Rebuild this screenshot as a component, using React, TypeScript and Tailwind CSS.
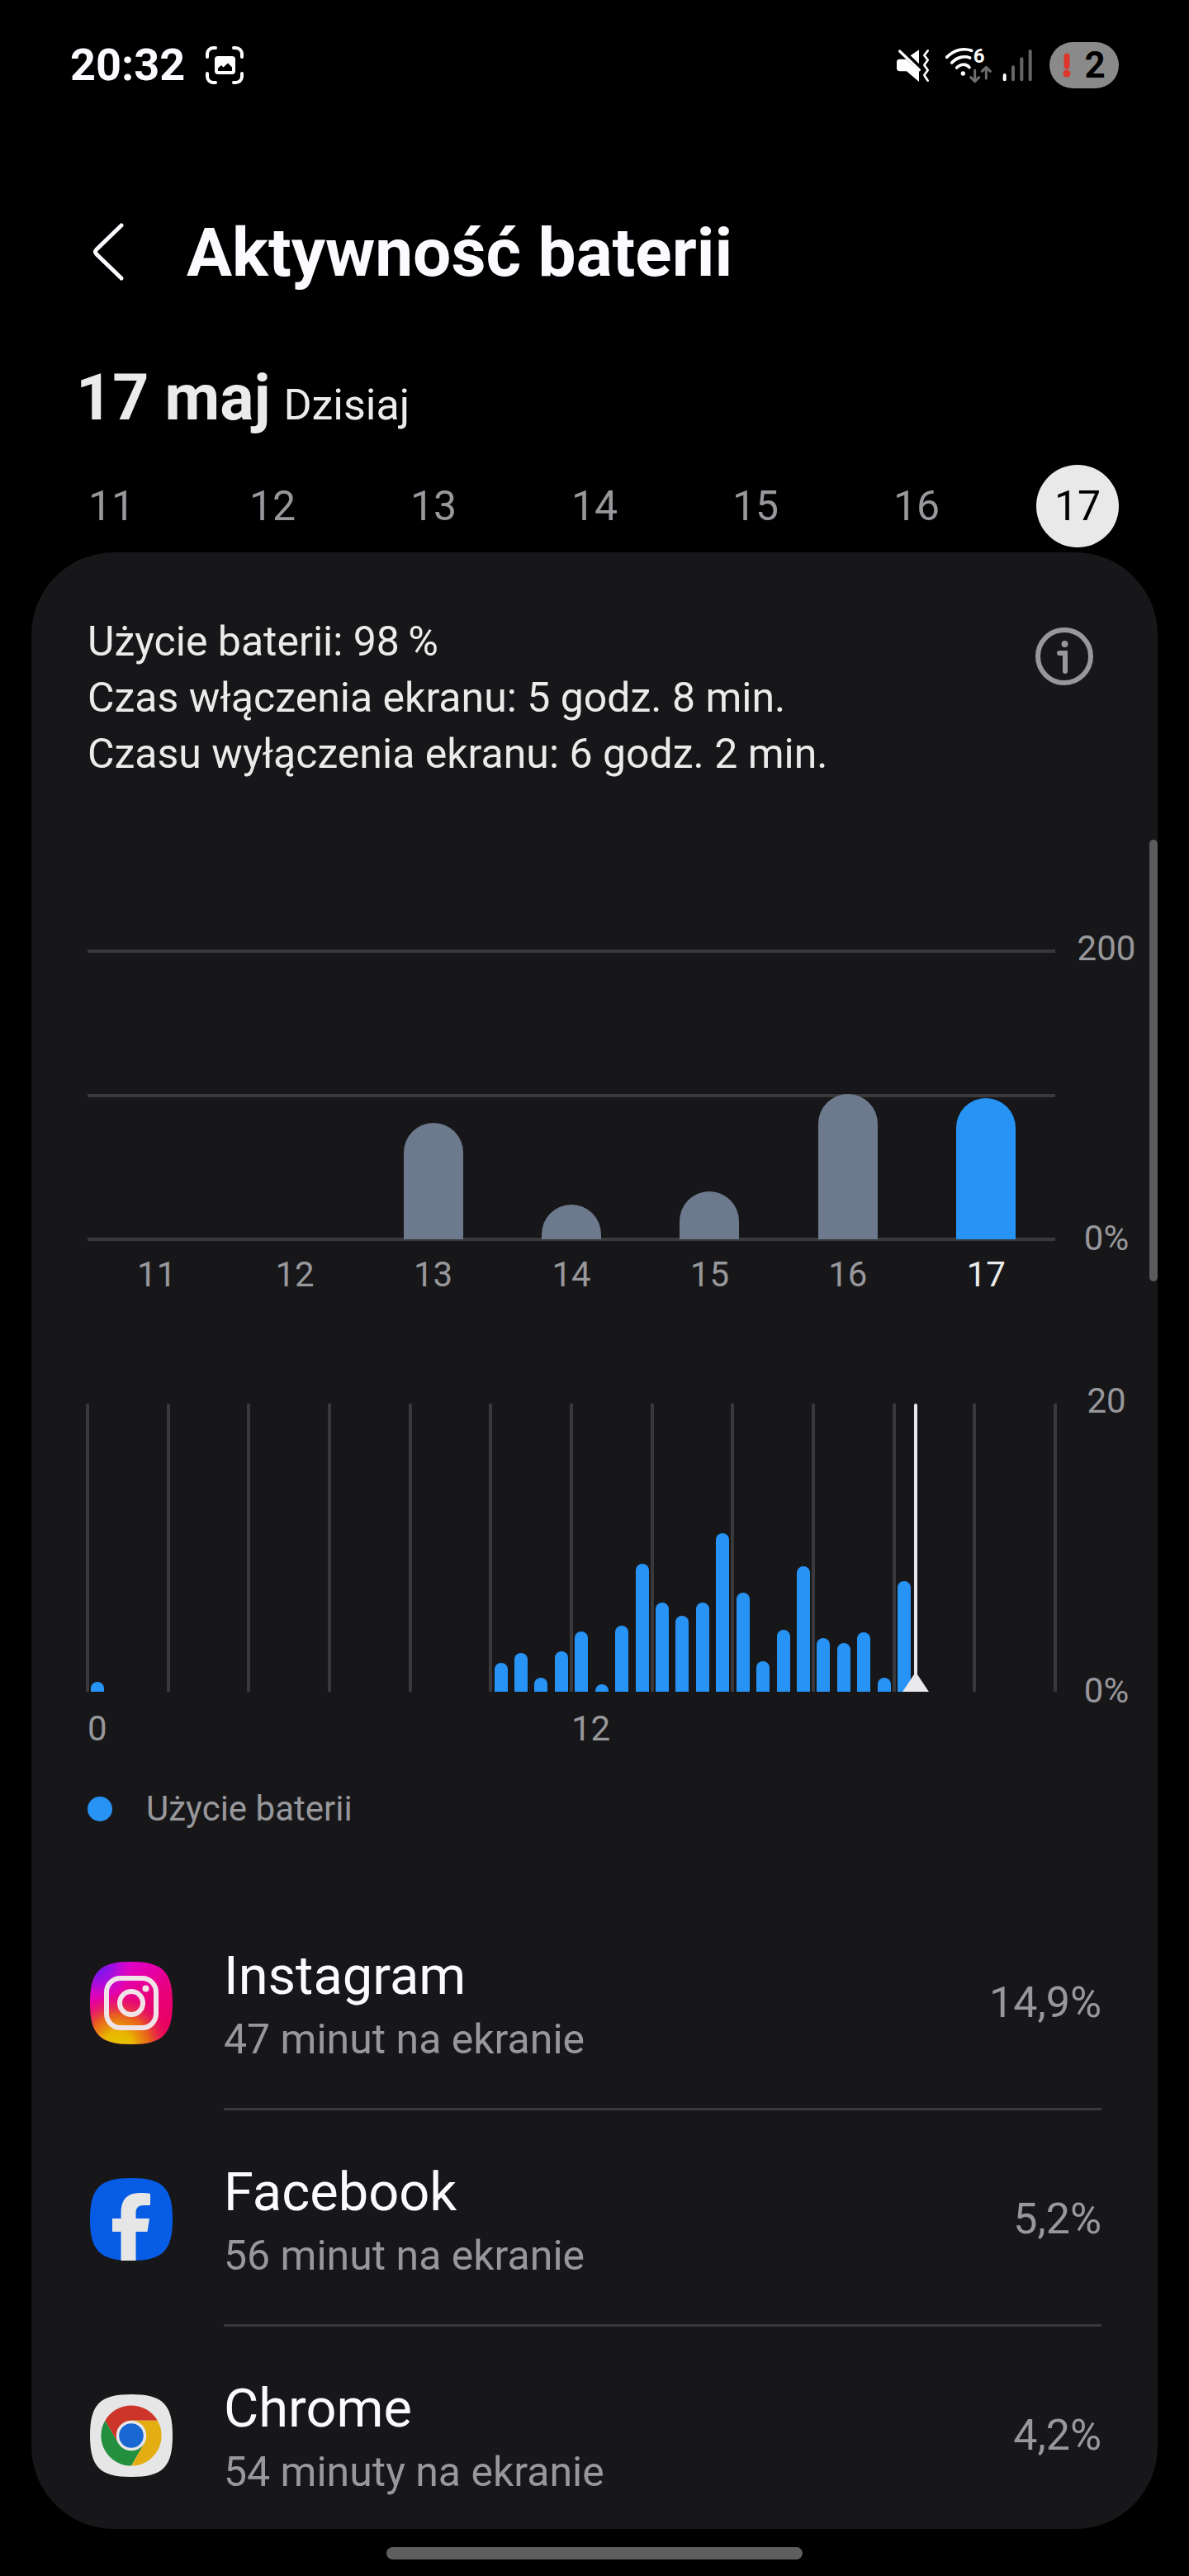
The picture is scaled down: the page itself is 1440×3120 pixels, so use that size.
import { useState, type ReactNode } from 'react';

interface AppUsage {
  name: string;
  screenTime: string;
  percent: string;
  icon: ReactNode;
}

const days = [11, 12, 13, 14, 15, 16, 17];

// zużycie dzienne w procentach, oś do 200%
const dailyUsage = [0, 0, 81, 24, 33, 101, 98];

// zużycie co pół godziny, oś do 20%
const halfHourUsage = [
  0.7, 0, 0, 0, 0, 0, 0, 0, 0, 0, 0, 0, 0, 0, 0, 0, 0, 0, 0, 0, 2, 2.7, 1, 2.8,
  4.2, 0.5, 4.6, 8.9, 6.2, 5.3, 6.2, 11, 6.9, 2.1, 4.3, 8.7, 3.7, 3.4, 4.1, 1, 7.7,
  0, 0, 0, 0, 0, 0, 0,
];

const currentHour = 20.53;

const SQUIRCLE = 'M50 0C88 0 100 12 100 50S88 100 50 100 0 88 0 50 12 0 50 0Z';

function InstagramIcon() {
  return (
    <svg viewBox="0 0 100 100" className="size-[100px]" aria-hidden="true">
      <defs>
        <linearGradient id="ig-base" x1="0.3" y1="0" x2="0.8" y2="1">
          <stop offset="0" stopColor="#e000d8" />
          <stop offset="0.5" stopColor="#e8007c" />
          <stop offset="1" stopColor="#e80058" />
        </linearGradient>
        <radialGradient id="ig-purple" gradientUnits="userSpaceOnUse" cx="8" cy="4" r="46">
          <stop offset="0" stopColor="#5a1cf0" />
          <stop offset="0.5" stopColor="#9a10e4" stopOpacity="0.8" />
          <stop offset="1" stopColor="#e010d0" stopOpacity="0" />
        </radialGradient>
        <radialGradient id="ig-yellow" gradientUnits="userSpaceOnUse" cx="34" cy="104" r="66">
          <stop offset="0" stopColor="#e6cc00" />
          <stop offset="0.3" stopColor="#e8b400" />
          <stop offset="0.6" stopColor="#e87010" stopOpacity="0.85" />
          <stop offset="1" stopColor="#e81060" stopOpacity="0" />
        </radialGradient>
      </defs>
      <path d={SQUIRCLE} fill="url(#ig-base)" />
      <path d={SQUIRCLE} fill="url(#ig-purple)" />
      <path d={SQUIRCLE} fill="url(#ig-yellow)" />
      <rect x="20" y="20" width="60" height="60" rx="17" fill="none" stroke="#f0e4e8" strokeWidth="6" />
      <circle cx="50" cy="50" r="14" fill="none" stroke="#f0e4e8" strokeWidth="6" />
      <circle cx="67.5" cy="32.5" r="4" fill="#f0e4e8" />
    </svg>
  );
}

function FacebookIcon() {
  return (
    <svg viewBox="0 0 100 100" className="size-[100px]" aria-hidden="true">
      <path d={SQUIRCLE} fill="#075ce5" />
      <path
        d="M37.500 100V65H27V49H37.500V42C37.500 26 45 18 60 18C66 18 70 18 73 19V33H66C58 33 55.500 36 55.500 43V49H72L69.500 65H55.500V100Z"
        fill="#e6e6e6"
      />
    </svg>
  );
}

function ChromeIcon() {
  return (
    <svg viewBox="0 0 100 100" className="size-[100px]" aria-hidden="true">
      <path d={SQUIRCLE} fill="#e6e6e6" />
      <path d="M50 50V31.700H81.700A36.600 36.600 0 0 0 18.300 31.700L34.150 59.150Z" fill="#cd3529" />
      <path d="M50 50L34.150 59.150L18.300 31.700A36.600 36.600 0 0 0 50 86.600L65.850 59.150Z" fill="#22903f" />
      <path d="M50 50L65.850 59.150L50 86.600A36.600 36.600 0 0 0 81.700 31.700H50Z" fill="#e4ae12" />
      <circle cx="50" cy="50" r="18.300" fill="#e6e6e6" />
      <circle cx="50" cy="50" r="14.800" fill="#1967d2" />
    </svg>
  );
}

const apps: AppUsage[] = [
  { name: 'Instagram', screenTime: '47 minut na ekranie', percent: '14,9%', icon: <InstagramIcon /> },
  { name: 'Facebook', screenTime: '56 minut na ekranie', percent: '5,2%', icon: <FacebookIcon /> },
  { name: 'Chrome', screenTime: '54 minuty na ekranie', percent: '4,2%', icon: <ChromeIcon /> },
];

function StatusBar() {
  return (
    <div className="flex h-[158px] items-center justify-between px-[85px]">
      <div className="flex items-center gap-6">
        <span className="text-[54px] font-bold leading-[60px]">20:32</span>
        <svg viewBox="0 0 48 48" className="size-12" fill="none" aria-hidden="true">
          <path
            d="M3 14V10.500A7.500 7.500 0 0 1 10.500 3H13M35 3H37.500A7.500 7.500 0 0 1 45 10.500V14M45 34V37.500A7.500 7.500 0 0 1 37.500 45H35M13 45H10.500A7.500 7.500 0 0 1 3 37.500V34"
            stroke="#fff"
            strokeWidth="4"
            strokeLinecap="round"
          />
          <rect x="12" y="13" width="25" height="22" rx="4" fill="#fff" />
          <path d="M16 31V27.500L20 24L22.500 26.500L28 21.500L33 26.500V31Z" fill="#000" />
        </svg>
      </div>

      <div className="flex items-center gap-3">
        {/* wyciszenie z wibracją */}
        <svg viewBox="0 0 138 126" className="h-[42px] w-[46px]" fill="none" aria-hidden="true">
          <path d="M11 12L82 80" stroke="#fff" strokeWidth="10" strokeLinecap="round" />
          <path d="M10 41H34L81 84V123L36 85H12Q0 84 0 74V52Q0 41 10 41Z" fill="#fff" />
          <path d="M81 7V58L50 28Z" fill="#fff" />
          <path
            d="M113 10L100 27L113 44L100 62L113 81L100 99L113 119"
            stroke="#fff"
            strokeWidth="8"
            strokeLinecap="round"
            strokeLinejoin="round"
          />
        </svg>
        {/* wifi 6 */}
        <svg viewBox="0 -18 174 168" className="h-[56px] w-[58px]" fill="none" aria-hidden="true">
          <path
            d="M8 37C36 8 70 3 98 13M26 57C46 36 72 31 92 39M44 75C58 60 78 60 90 74"
            stroke="#fff"
            strokeWidth="11"
            strokeLinecap="round"
          />
          <circle cx="67" cy="96" r="8" fill="#fff" />
          <path
            d="M110 84V124M95 110L110 125L125 110M151 114V74M136 88L151 73L166 88"
            stroke="#6e6e6e"
            strokeWidth="9"
            strokeLinecap="round"
            strokeLinejoin="round"
          />
          <text x="104" y="57" fontSize="72" fontWeight="700" fill="#fff">6</text>
        </svg>
        {/* zasięg */}
        <svg viewBox="0 0 111 126" className="h-[42px] w-[37px]" strokeWidth="12" strokeLinecap="round" aria-hidden="true">
          <path d="M8 99V115" stroke="#fff" />
          <path d="M39 70V115M70 40V115M101 12V115" stroke="#666" />
        </svg>
        <div className="ml-2 flex h-14 w-[84px] items-center justify-center gap-4 rounded-full bg-[#8a8a8a] text-black">
          <svg viewBox="0 0 10 30" className="h-[30px] w-[10px]" aria-hidden="true">
            <path d="M5 4V16" stroke="#dc352c" strokeWidth="7" strokeLinecap="round" />
            <circle cx="5" cy="25" r="4.500" fill="#dc352c" />
          </svg>
          <span className="text-[44px] font-bold leading-[56px]">2</span>
        </div>
      </div>
    </div>
  );
}

function AxisLabels({ top, bottom }: { top: string; bottom: string }) {
  return (
    <div className="-mt-6 -mb-5 flex w-[124px] flex-col items-center justify-between text-[42px] leading-[42px] text-[#98979b]">
      <span>{top}</span>
      <span>{bottom}</span>
    </div>
  );
}

function DailyChart({ selected }: { selected: number }) {
  return (
    <div className="mt-[205px]">
      <div className="-mr-[68px] flex h-[349px]">
        <div className="relative flex-1">
          <div className="absolute inset-x-0 -inset-y-[2px] flex flex-col justify-between">
            <div className="h-1 bg-[#39393b]" />
            <div className="h-1 bg-[#39393b]" />
            <div className="h-1 bg-[#39393b]" />
          </div>
          <div className="relative grid h-full grid-cols-7 items-end justify-items-center">
            {dailyUsage.map((value, i) => (
              <div
                key={days[i]}
                className={`w-[72px] rounded-t-full ${days[i] === selected ? 'bg-[#2693f5]' : 'bg-[#6d798c]'}`}
                style={{ height: `${value / 2}%` }}
              />
            ))}
          </div>
        </div>
        <AxisLabels top="200" bottom="0%" />
      </div>
      <div className="mr-[56px] mt-[22px] grid grid-cols-7 text-center text-[42px] leading-[42px] text-[#98979b]">
        {days.map((day) => (
          <span key={day} className={day === selected ? 'text-[#ebebeb]' : ''}>
            {day}
          </span>
        ))}
      </div>
    </div>
  );
}

function HourlyChart() {
  return (
    <div className="mt-[135px]">
      <div className="-mr-[68px] flex h-[349px]">
        <div className="relative flex-1">
          <div className="absolute -inset-x-[2px] inset-y-0 flex justify-between">
            {Array.from({ length: 13 }, (_, i) => (
              <div key={i} className="w-1 bg-[#39393b]" />
            ))}
          </div>
          <div className="relative flex h-full items-end">
            {halfHourUsage.map((value, i) => (
              <div key={i} className="flex h-full flex-1 items-end justify-center">
                <div className="w-4 rounded-t-full bg-[#2693f5]" style={{ height: `${value * 5}%` }} />
              </div>
            ))}
          </div>
          {/* znacznik bieżącej godziny */}
          <svg
            viewBox="0 0 32 350"
            className="absolute bottom-0 h-full w-8 -translate-x-1/2"
            style={{ left: `${(currentHour / 24) * 100}%` }}
            aria-hidden="true"
          >
            <path d="M16 2V340" stroke="#e9e9ec" strokeWidth="4" strokeLinecap="round" />
            <path d="M16 326L32 350H0Z" fill="#e9e9ec" />
          </svg>
        </div>
        <AxisLabels top="20" bottom="0%" />
      </div>
      <div className="mr-[56px] mt-6 grid grid-cols-2 text-[42px] leading-[42px] text-[#98979b]">
        <span>0</span>
        <span>12</span>
      </div>
    </div>
  );
}

export default function App() {
  const [selected, setSelected] = useState(17);

  return (
    <div className="min-h-screen bg-black pb-5 font-['Roboto',sans-serif] text-[#fbfbff]">
      <StatusBar />

      <header className="mt-[100px] flex h-24 items-center">
        <button type="button" aria-label="Wstecz" className="ml-[105px] mr-[69px]">
          <svg viewBox="0 0 52 72" className="h-[72px] w-[52px]" fill="none" aria-hidden="true">
            <path
              d="M42 3L12 32Q9 35 12 38L42 67"
              stroke="currentColor"
              strokeWidth="5"
              strokeLinecap="round"
            />
          </svg>
        </button>
        <h1 className="text-[82px] font-bold leading-[96px]">Aktywność baterii</h1>
      </header>

      <h2 className="mt-20 flex items-baseline gap-4 pl-[92px] text-[77px] font-bold leading-[96px] text-[#ebebeb]">
        17 maj
        <span className="text-[52px] font-normal leading-[60px]">Dzisiaj</span>
      </h2>

      <nav className="mt-[33px] flex justify-between px-[85px]">
        {days.map((day) => (
          <button
            key={day}
            type="button"
            onClick={() => setSelected(day)}
            className={`size-[100px] rounded-full text-[50px] ${
              day === selected ? 'bg-[#e9e9e9] text-black' : 'text-[#98979b]'
            }`}
          >
            {day}
          </button>
        ))}
      </nav>

      <main className="relative mx-[38px] mt-[6px] rounded-[100px] bg-[#17171a] px-[68px] pt-[74px]">
        <div className="flex items-start justify-between">
          <div className="text-[50px] leading-[68px] text-[#ebebeb]">
            <p>Użycie baterii: 98{'\u2009'}%</p>
            <p>Czas włączenia ekranu: 5 godz. 8 min.</p>
            <p>Czasu wyłączenia ekranu: 6 godz. 2 min.</p>
          </div>
          <button type="button" aria-label="Informacje" className="mr-[10px] mt-[17px]">
            <svg viewBox="0 0 70 70" className="size-[70px]" fill="none" stroke="#98979b" aria-hidden="true">
              <circle cx="35" cy="35" r="32" strokeWidth="6" />
              <path d="M29 31H36V53" strokeWidth="6" strokeLinecap="round" />
              <circle cx="35.500" cy="20" r="4" fill="#98979b" stroke="none" />
            </svg>
          </button>
        </div>

        <DailyChart selected={selected} />
        <HourlyChart />

        <div className="mt-[55px] flex items-center gap-[41px] text-[42px] leading-[42px] text-[#98979b]">
          <span className="size-[30px] rounded-full bg-[#2693f5]" />
          Użycie baterii
        </div>

        <ul className="mt-[82px]">
          {apps.map((app, i) => (
            <li key={app.name}>
              <button
                type="button"
                className={`flex w-full items-center pl-[3px] pt-[55px] text-left ${
                  i === apps.length - 1 ? 'pb-9' : 'pb-[50px]'
                }`}
              >
                {app.icon}
                <span className="ml-[62px] flex flex-1 flex-col">
                  <span className="text-[65px] leading-[88px]">{app.name}</span>
                  <span className="text-[50px] leading-[66px] text-[#98979b]">{app.screenTime}</span>
                </span>
                <span className="text-[52px] leading-[66px] text-[#98979b]">{app.percent}</span>
              </button>
              {i < apps.length - 1 && <div className="ml-[165px] h-[3px] bg-[#39393b]" />}
            </li>
          ))}
        </ul>

        {/* pasek przewijania */}
        <div className="absolute right-0 top-[348px] h-[535px] w-[10px] rounded-full bg-[#5b5b5d]" />
      </main>

      <div className="mx-auto mt-[22px] h-[15px] w-[35%] rounded-full bg-[#5e5e5e]" />
    </div>
  );
}
